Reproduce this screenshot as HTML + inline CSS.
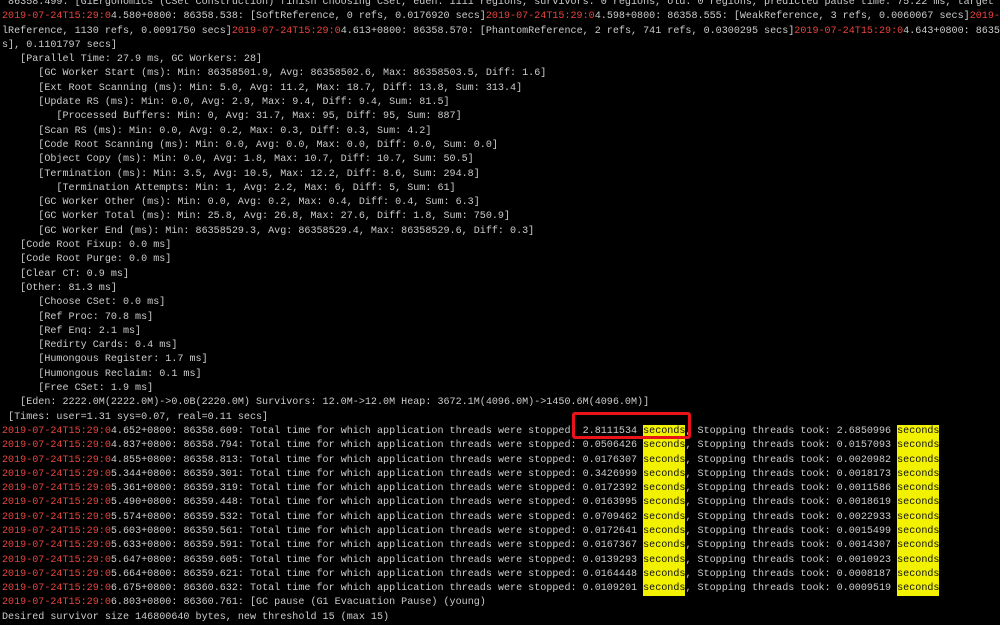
<!DOCTYPE html>
<html><head><meta charset="utf-8"><style>
html,body{margin:0;padding:0;background:#000;width:1000px;height:621px;overflow:hidden}
#t{position:absolute;left:2px;top:-4px;width:998px;overflow:hidden;font-family:"Liberation Mono",monospace;font-size:10.08px;color:#cccccc}
#t div{height:14.3px;line-height:14.3px;white-space:pre;overflow:hidden}
.r{color:#e8453c}
.y{background:#f2f200;color:#111;display:inline-block;height:14.3px;line-height:14.3px;vertical-align:top}
#box{position:absolute;left:572px;top:412px;width:113px;height:21px;border:3px solid #e8141a;border-radius:3px}
</style></head><body>
<div id="t"><div> 86358.499: [G1Ergonomics (CSet Construction) finish choosing CSet, eden: 1111 regions, survivors: 0 regions, old: 0 regions, predicted pause time: 75.22 ms, target pause</div><div><span class="r">2019-07-24T15:29:0</span>4.580+0800: 86358.538: [SoftReference, 0 refs, 0.0176920 secs]<span class="r">2019-07-24T15:29:0</span>4.598+0800: 86358.555: [WeakReference, 3 refs, 0.0060067 secs]<span class="r">2019-07-24T15:29:0</span></div><div>lReference, 1130 refs, 0.0091750 secs]<span class="r">2019-07-24T15:29:0</span>4.613+0800: 86358.570: [PhantomReference, 2 refs, 741 refs, 0.0300295 secs]<span class="r">2019-07-24T15:29:0</span>4.643+0800: 86358.</div><div>s], 0.1101797 secs]</div><div>   [Parallel Time: 27.9 ms, GC Workers: 28]</div><div>      [GC Worker Start (ms): Min: 86358501.9, Avg: 86358502.6, Max: 86358503.5, Diff: 1.6]</div><div>      [Ext Root Scanning (ms): Min: 5.0, Avg: 11.2, Max: 18.7, Diff: 13.8, Sum: 313.4]</div><div>      [Update RS (ms): Min: 0.0, Avg: 2.9, Max: 9.4, Diff: 9.4, Sum: 81.5]</div><div>         [Processed Buffers: Min: 0, Avg: 31.7, Max: 95, Diff: 95, Sum: 887]</div><div>      [Scan RS (ms): Min: 0.0, Avg: 0.2, Max: 0.3, Diff: 0.3, Sum: 4.2]</div><div>      [Code Root Scanning (ms): Min: 0.0, Avg: 0.0, Max: 0.0, Diff: 0.0, Sum: 0.0]</div><div>      [Object Copy (ms): Min: 0.0, Avg: 1.8, Max: 10.7, Diff: 10.7, Sum: 50.5]</div><div>      [Termination (ms): Min: 3.5, Avg: 10.5, Max: 12.2, Diff: 8.6, Sum: 294.8]</div><div>         [Termination Attempts: Min: 1, Avg: 2.2, Max: 6, Diff: 5, Sum: 61]</div><div>      [GC Worker Other (ms): Min: 0.0, Avg: 0.2, Max: 0.4, Diff: 0.4, Sum: 6.3]</div><div>      [GC Worker Total (ms): Min: 25.8, Avg: 26.8, Max: 27.6, Diff: 1.8, Sum: 750.9]</div><div>      [GC Worker End (ms): Min: 86358529.3, Avg: 86358529.4, Max: 86358529.6, Diff: 0.3]</div><div>   [Code Root Fixup: 0.0 ms]</div><div>   [Code Root Purge: 0.0 ms]</div><div>   [Clear CT: 0.9 ms]</div><div>   [Other: 81.3 ms]</div><div>      [Choose CSet: 0.0 ms]</div><div>      [Ref Proc: 70.8 ms]</div><div>      [Ref Enq: 2.1 ms]</div><div>      [Redirty Cards: 0.4 ms]</div><div>      [Humongous Register: 1.7 ms]</div><div>      [Humongous Reclaim: 0.1 ms]</div><div>      [Free CSet: 1.9 ms]</div><div>   [Eden: 2222.0M(2222.0M)-&gt;0.0B(2220.0M) Survivors: 12.0M-&gt;12.0M Heap: 3672.1M(4096.0M)-&gt;1450.6M(4096.0M)]</div><div> [Times: user=1.31 sys=0.07, real=0.11 secs]</div><div><span class="r">2019-07-24T15:29:0</span>4.652+0800: 86358.609: Total time for which application threads were stopped  2.8111534 <span class="y">seconds</span>, Stopping threads took: 2.6850996 <span class="y">seconds</span></div><div><span class="r">2019-07-24T15:29:0</span>4.837+0800: 86358.794: Total time for which application threads were stopped: 0.0506426 <span class="y">seconds</span>, Stopping threads took: 0.0157093 <span class="y">seconds</span></div><div><span class="r">2019-07-24T15:29:0</span>4.855+0800: 86358.813: Total time for which application threads were stopped: 0.0176307 <span class="y">seconds</span>, Stopping threads took: 0.0020982 <span class="y">seconds</span></div><div><span class="r">2019-07-24T15:29:0</span>5.344+0800: 86359.301: Total time for which application threads were stopped: 0.3426999 <span class="y">seconds</span>, Stopping threads took: 0.0018173 <span class="y">seconds</span></div><div><span class="r">2019-07-24T15:29:0</span>5.361+0800: 86359.319: Total time for which application threads were stopped: 0.0172392 <span class="y">seconds</span>, Stopping threads took: 0.0011586 <span class="y">seconds</span></div><div><span class="r">2019-07-24T15:29:0</span>5.490+0800: 86359.448: Total time for which application threads were stopped: 0.0163995 <span class="y">seconds</span>, Stopping threads took: 0.0018619 <span class="y">seconds</span></div><div><span class="r">2019-07-24T15:29:0</span>5.574+0800: 86359.532: Total time for which application threads were stopped: 0.0709462 <span class="y">seconds</span>, Stopping threads took: 0.0022933 <span class="y">seconds</span></div><div><span class="r">2019-07-24T15:29:0</span>5.603+0800: 86359.561: Total time for which application threads were stopped: 0.0172641 <span class="y">seconds</span>, Stopping threads took: 0.0015499 <span class="y">seconds</span></div><div><span class="r">2019-07-24T15:29:0</span>5.633+0800: 86359.591: Total time for which application threads were stopped: 0.0167367 <span class="y">seconds</span>, Stopping threads took: 0.0014307 <span class="y">seconds</span></div><div><span class="r">2019-07-24T15:29:0</span>5.647+0800: 86359.605: Total time for which application threads were stopped: 0.0139293 <span class="y">seconds</span>, Stopping threads took: 0.0010923 <span class="y">seconds</span></div><div><span class="r">2019-07-24T15:29:0</span>5.664+0800: 86359.621: Total time for which application threads were stopped: 0.0164448 <span class="y">seconds</span>, Stopping threads took: 0.0008187 <span class="y">seconds</span></div><div><span class="r">2019-07-24T15:29:0</span>6.675+0800: 86360.632: Total time for which application threads were stopped: 0.0109201 <span class="y">seconds</span>, Stopping threads took: 0.0009519 <span class="y">seconds</span></div><div><span class="r">2019-07-24T15:29:0</span>6.803+0800: 86360.761: [GC pause (G1 Evacuation Pause) (young)</div><div>Desired survivor size 146800640 bytes, new threshold 15 (max 15)</div></div>
<div id="box"></div>
</body></html>
